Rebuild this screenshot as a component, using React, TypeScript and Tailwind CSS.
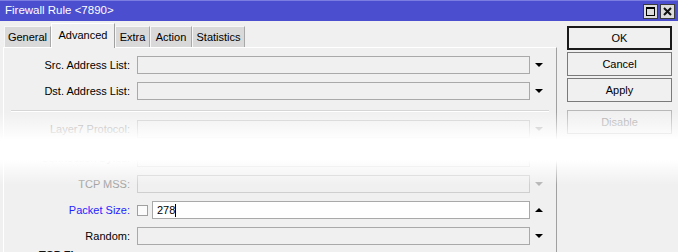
import React from 'react';

interface Row {
  label: string;
  tone?: 'normal' | 'muted' | 'blue';
  arrow?: 'down' | 'up';
}

const Arrow: React.FC<{ dir: 'down' | 'up'; muted?: boolean }> = ({ dir, muted }) => (
  <div className="w-[22px] flex justify-start pl-[5px]">
    {dir === 'down' ? (
      <div
        className={`w-0 h-0 border-l-[4px] border-r-[4px] border-t-[4px] border-l-transparent border-r-transparent ${
          muted ? 'border-t-[#b4b4b4]' : 'border-t-black'
        }`}
      />
    ) : (
      <div className="w-0 h-0 border-l-[4px] border-r-[4px] border-b-[4px] border-l-transparent border-r-transparent border-b-black" />
    )}
  </div>
);

const FieldRow: React.FC<Row & { className?: string }> = ({ label, tone = 'normal', arrow = 'down', className }) => {
  const labelColor =
    tone === 'muted' ? 'text-[#a3a3a3]' : tone === 'blue' ? 'text-[#1f1fff]' : 'text-black';
  return (
    <div className={`flex items-center h-[18px] ${className ?? 'mb-[8px]'}`}>
      <div className={`w-[127px] text-right pr-[1px] ${labelColor}`}>{label}:</div>
      <div
        className={`ml-[6px] w-[393px] h-[18px] border ${
          tone === 'muted' ? 'border-[#cfcfcf] bg-[#f0f0f0]' : 'border-[#a9a9a9] bg-[#f0f0f0]'
        }`}
      />
      <Arrow dir={arrow} muted={tone === 'muted'} />
    </div>
  );
};

const tabs = [
  { name: 'General', w: 'w-[47px]' },
  { name: 'Advanced', w: 'w-[64px]', active: true },
  { name: 'Extra', w: 'w-[35px]' },
  { name: 'Action', w: 'w-[42px]' },
  { name: 'Statistics', w: 'w-[53px]' },
];

const Btn: React.FC<{ label: string; primary?: boolean; disabled?: boolean; className?: string }> = ({
  label,
  primary,
  disabled,
  className,
}) => (
  <div
    className={`h-[24px] w-[105px] flex items-center justify-center bg-[#f0f0f0] ${
      primary ? 'border-2 border-[#1a1a1a]' : 'border border-[#7a7a7a]'
    } ${disabled ? 'text-[#a8a8a8] border-[#b8b8b8]' : 'text-black'} ${className ?? ''}`}
  >
    {label}
  </div>
);

export default function App() {
  return (
    <div className="relative w-[678px] h-[252px] overflow-hidden bg-[#f0f0f0] text-[11px] leading-none font-['Liberation_Sans',Arial,sans-serif]">
      {/* title bar */}
      <div className="h-[21px] bg-[#4a4ecf] border-t border-[#7b7ee0] flex items-center justify-between pl-[5px] pr-[3px] text-white">
        <span className="text-[11.5px]">Firewall Rule &lt;7890&gt;</span>
        <div className="flex gap-[2px]">
          <div className="w-[15px] h-[15px] bg-[#dcdcdc] border border-[#3a3a3a] flex items-center justify-center">
            <div className="w-[9px] h-[9px] border border-black border-t-2" />
          </div>
          <div className="w-[15px] h-[15px] bg-[#dcdcdc] border border-[#3a3a3a] flex items-center justify-center">
            <svg width="9" height="9" viewBox="0 0 9 9">
              <path d="M1 1 L8 8 M8 1 L1 8" stroke="#111" strokeWidth="2" />
            </svg>
          </div>
        </div>
      </div>

      <div className="flex">
        {/* left: tabs + panel */}
        <div className="w-[557px] pl-[3px]">
          <div className="flex items-end h-[26px] pl-[1px]">
            {tabs.map((t) =>
              t.active ? (
                <div
                  key={t.name}
                  className={`${t.w} h-[25px] relative z-10 -mb-[1px] bg-[#f0f0f0] border-t border-l border-white border-r border-r-[#a0a0a0] flex items-center justify-center pb-[2px]`}
                >
                  {t.name}
                </div>
              ) : (
                <div
                  key={t.name}
                  className={`${t.w} h-[21px] bg-[#d9d9d9] border-t border-l border-[#f7f7f7] border-r border-r-[#a8a8a8] flex items-center justify-center`}
                >
                  {t.name}
                </div>
              )
            )}
          </div>
          <div className="h-[210px] border-t border-l border-white border-r border-r-[#a0a0a0] pt-[8px]">
            <FieldRow label="Src. Address List" />
            <FieldRow label="Dst. Address List" className="mb-0" />
            <div className="mx-[7px] mt-[10px] mb-[8px] border-t border-[#d6d6d6] border-b border-b-white" />
            <FieldRow label="Layer7 Protocol" tone="muted" className="mb-[11px]" />
            <FieldRow label="Connection Bytes" tone="muted" />
            <FieldRow label="TCP MSS" tone="muted" />
            <div className="flex items-center h-[18px] mb-[8px]">
              <div className="w-[127px] text-right pr-[1px] text-[#1f1fff]">Packet Size:</div>
              <div className="ml-[6px] w-[11px] h-[11px] border border-[#a0a0a0] bg-[#fbfbfb]" />
              <div className="ml-[4px] w-[378px] h-[18px] border border-[#a9a9a9] bg-white flex items-center pl-[4px]">
                <span>278</span>
                <span className="w-px h-[13px] bg-black" />
              </div>
              <Arrow dir="up" />
            </div>
            <FieldRow label="Random" className="mb-[5px]" />
            <div className="pl-[35px] font-bold text-[#111]">TCP Flags</div>
          </div>
        </div>

        {/* right: buttons */}
        <div className="pl-[10px] pt-[5px] flex flex-col">
          <Btn label="OK" primary />
          <Btn label="Cancel" className="mt-[2px]" />
          <Btn label="Apply" className="mt-[2px]" />
          <Btn label="Disable" disabled className="mt-[8px]" />
        </div>
      </div>

      {/* torn/faded band over the middle */}
      <div className="pointer-events-none absolute left-0 right-0 top-[112px] h-[73px] bg-[linear-gradient(to_bottom,rgba(255,255,255,0)_0%,rgba(255,255,255,0.45)_19%,#fff_38%,#fff_66%,rgba(255,255,255,0.5)_82%,rgba(255,255,255,0)_100%)]" />
    </div>
  );
}
